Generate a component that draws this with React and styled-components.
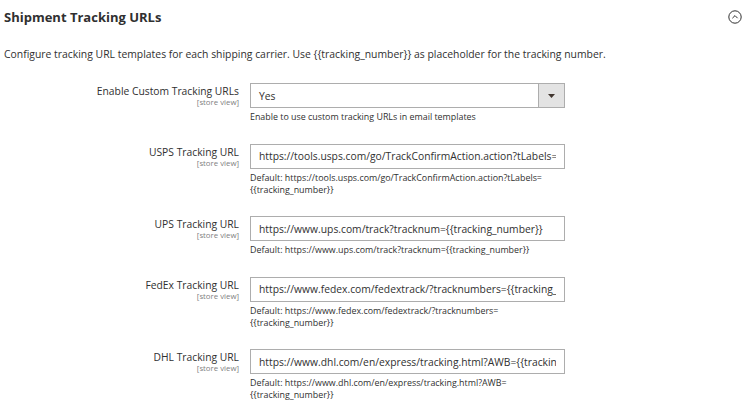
import React from 'react'
import styled, { createGlobalStyle } from 'styled-components'

const GlobalStyle = createGlobalStyle`
  body {
    margin: 0;
    background: #fff;
    font-family: "Open Sans", "Liberation Sans", sans-serif;
    color: #303030;
  }
`

const fields = [
  {
    label: 'USPS Tracking URL',
    value: 'https://tools.usps.com/go/TrackConfirmAction.action?tLabels={{tracking_number}}',
    note: ['Default: https://tools.usps.com/go/TrackConfirmAction.action?tLabels=', '{{tracking_number}}'],
  },
  {
    label: 'UPS Tracking URL',
    value: 'https://www.ups.com/track?tracknum={{tracking_number}}',
    note: ['Default: https://www.ups.com/track?tracknum={{tracking_number}}'],
  },
  {
    label: 'FedEx Tracking URL',
    value: 'https://www.fedex.com/fedextrack/?tracknumbers={{tracking_number}}',
    note: ['Default: https://www.fedex.com/fedextrack/?tracknumbers=', '{{tracking_number}}'],
  },
  {
    label: 'DHL Tracking URL',
    value: 'https://www.dhl.com/en/express/tracking.html?AWB={{tracking_number}}',
    note: ['Default: https://www.dhl.com/en/express/tracking.html?AWB=', '{{tracking_number}}'],
  },
]

const App = () => {
  return (
    <>
      <GlobalStyle />
      <Page>
        <Header>
          <Title>Shipment Tracking URLs</Title>
          <Collapse aria-label="collapse">
            <svg width="14" height="14" viewBox="0 0 14 14">
              <circle cx="7" cy="7" r="6.2" fill="none" stroke="#303030" strokeWidth="1" />
              <path d="M4.4 8.2 L7 5.6 L9.6 8.2" fill="none" stroke="#303030" strokeWidth="1" />
            </svg>
          </Collapse>
        </Header>
        <Description>
          Configure tracking URL templates for each shipping carrier. Use {'{{tracking_number}}'} as placeholder for the tracking number.
        </Description>
        <Form>
          <Row>
            <LabelCell>
              <LabelText>Enable Custom Tracking URLs</LabelText>
              <Scope>[store view]</Scope>
            </LabelCell>
            <Control>
              <Select>
                <SelectValue>Yes</SelectValue>
                <SelectArrow>
                  <svg width="7" height="4" viewBox="0 0 7 4">
                    <path d="M0 0 H7 L3.5 4 Z" fill="#41362f" />
                  </svg>
                </SelectArrow>
              </Select>
              <Note>Enable to use custom tracking URLs in email templates</Note>
            </Control>
          </Row>
          {fields.map((f) => (
            <Row key={f.label}>
              <LabelCell>
                <LabelText>{f.label}</LabelText>
                <Scope>[store view]</Scope>
              </LabelCell>
              <Control>
                <Input type="text" defaultValue={f.value} />
                <Note>
                  {f.note.map((line) => (
                    <div key={line}>{line}</div>
                  ))}
                </Note>
              </Control>
            </Row>
          ))}
        </Form>
      </Page>
    </>
  )
}

const Page = styled.div`
  width: 750px;
  height: 418px;
  overflow: hidden;
  padding: 0 4px;
  box-sizing: border-box;
`

const Header = styled.div`
  display: flex;
  align-items: center;
  justify-content: space-between;
  height: 32px;
  padding-top: 1px;
`

const Title = styled.h2`
  margin: 0;
  font-size: 13px;
  font-weight: 700;
  color: #303030;
`

const Collapse = styled.div`
  display: flex;
  align-items: center;
  margin-right: 4px;
`

const Description = styled.p`
  margin: 13px 0 0;
  font-size: 10.4px;
  line-height: 16px;
  color: #303030;
`

const Form = styled.div`
  display: flex;
  flex-direction: column;
  gap: 20.5px;
  margin-top: 21px;
`

const Row = styled.div`
  display: grid;
  grid-template-columns: 235px 315px;
  column-gap: 11px;
`

const LabelCell = styled.div`
  display: flex;
  flex-direction: column;
  align-items: flex-end;
  padding-top: 1px;
`

const LabelText = styled.span`
  font-size: 10.3px;
  line-height: 14px;
  color: #303030;
`

const Scope = styled.span`
  font-size: 7.8px;
  line-height: 9px;
  color: #808080;
`

const Control = styled.div`
  display: flex;
  flex-direction: column;
`

const Select = styled.div`
  display: flex;
  height: 25px;
  box-sizing: border-box;
  border: 1px solid #adadad;
  background: #fff;
`

const SelectValue = styled.span`
  flex: 1;
  display: flex;
  align-items: center;
  padding-left: 8px;
  font-size: 10.3px;
  color: #303030;
`

const SelectArrow = styled.span`
  width: 25px;
  display: flex;
  align-items: center;
  justify-content: center;
  background: #e3e3e3;
  border-left: 1px solid #adadad;
`

const Input = styled.input`
  height: 25px;
  box-sizing: border-box;
  width: 100%;
  border: 1px solid #adadad;
  border-radius: 0;
  padding: 0 8px;
  font-family: "Open Sans", "Liberation Sans", sans-serif;
  font-size: 10.3px;
  color: #303030;
  outline: none;
`

const Note = styled.div`
  margin-top: 3px;
  font-size: 8.9px;
  line-height: 12px;
  color: #303030;
`

export default App
